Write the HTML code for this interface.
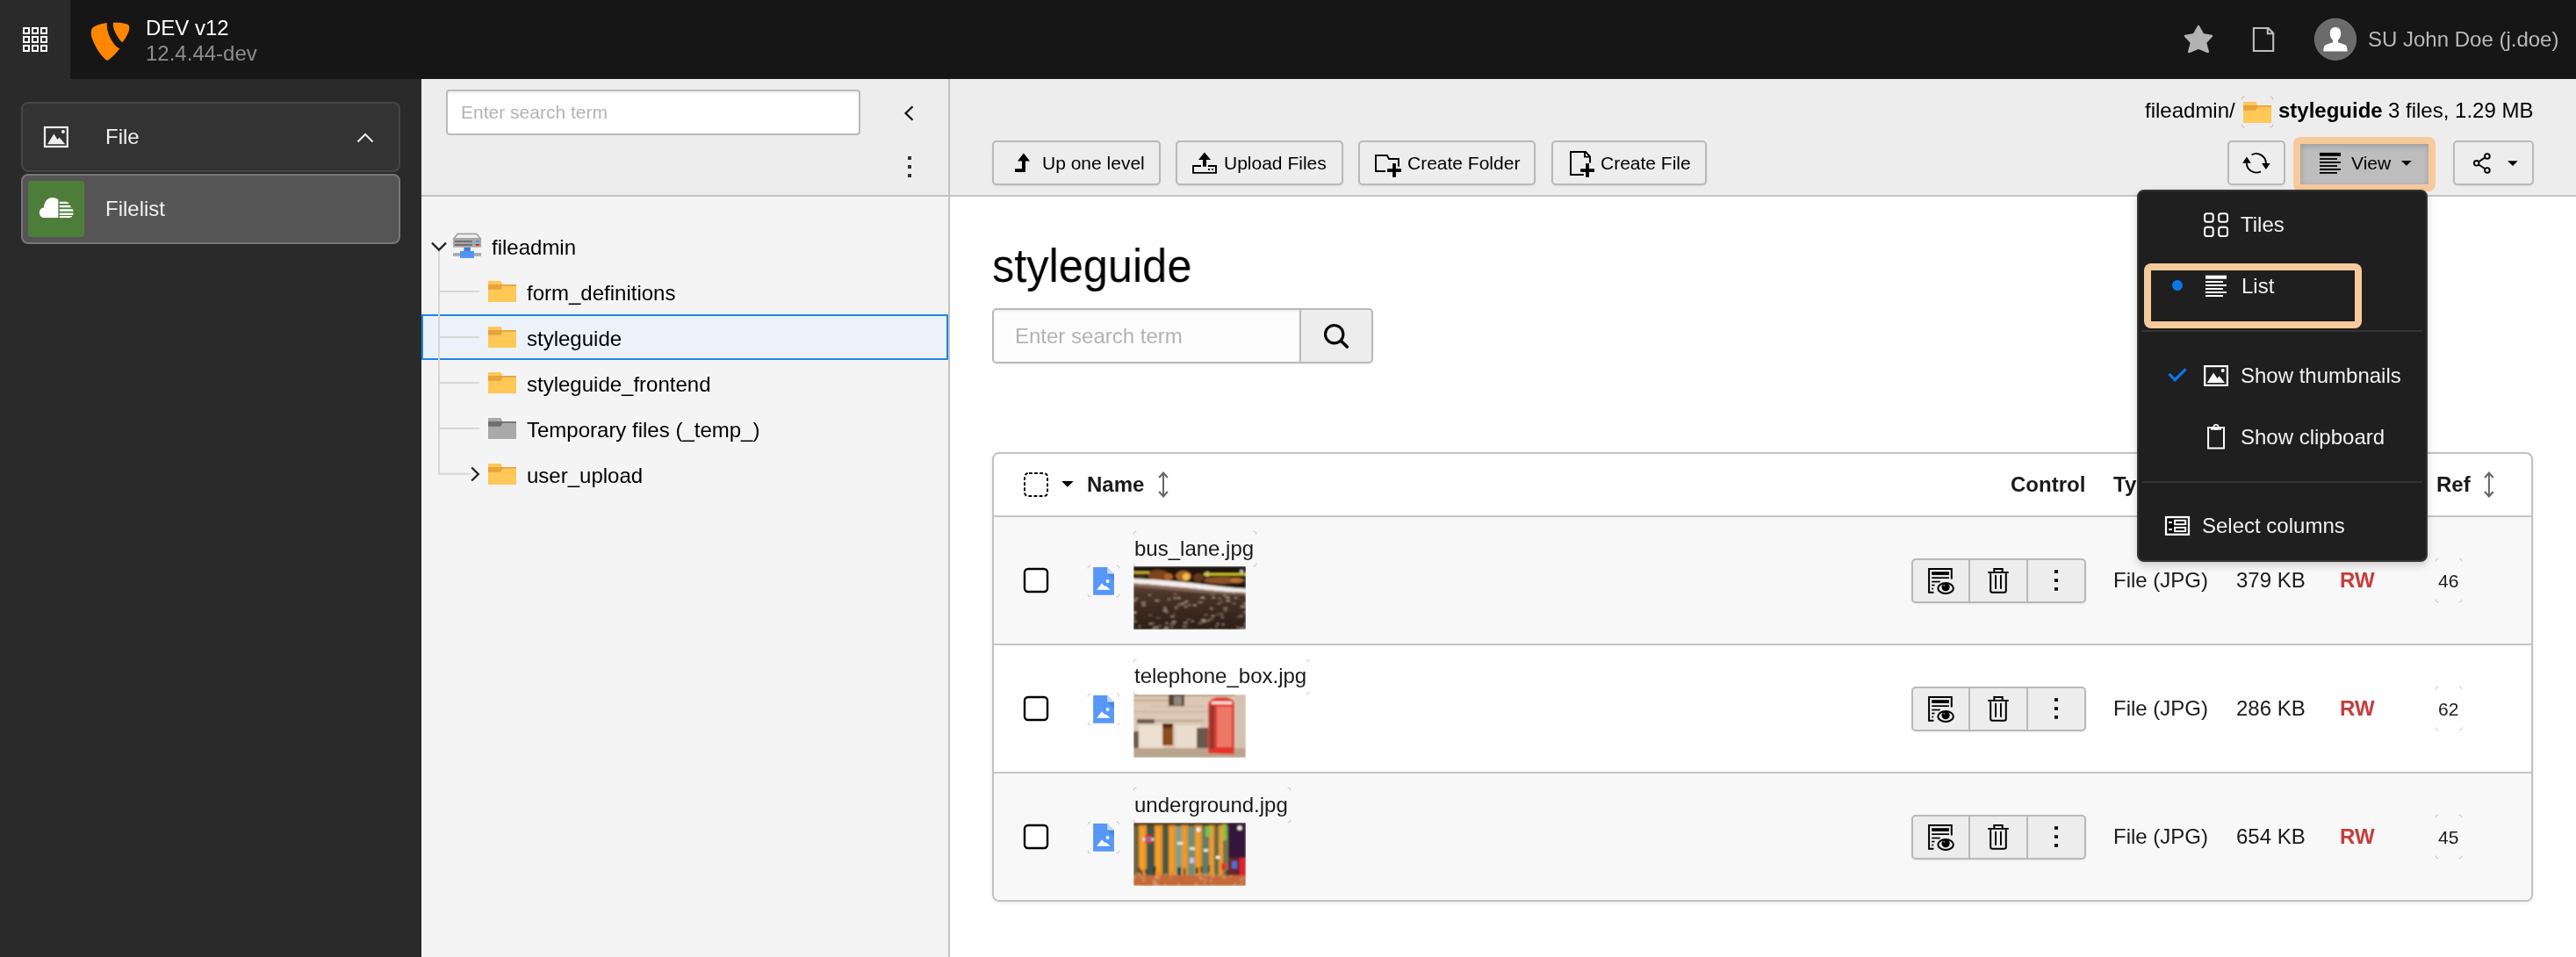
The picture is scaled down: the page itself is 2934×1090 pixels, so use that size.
<!DOCTYPE html>
<html><head><meta charset="utf-8">
<style>
*{box-sizing:border-box;margin:0;padding:0}
html,body{width:2934px;height:1090px;overflow:hidden;background:#fff;font-family:"Liberation Sans",sans-serif;color:#000}
svg{position:absolute;overflow:visible}
#topbar{position:absolute;left:0;top:0;width:2934px;height:90px;background:#161616}
#mtoggle{position:absolute;left:0;top:0;width:80px;height:90px;background:#2a2a2a}
#sidebar{position:absolute;left:0;top:90px;width:480px;height:1000px;background:#2a2a2a}
#treehead{position:absolute;left:480px;top:90px;width:600px;height:132px;background:#ededed}
#treebody{position:absolute;left:480px;top:224px;width:600px;height:866px;background:#f4f4f4}
.hline{position:absolute;height:2px;background:#c3c3c3}
.vline{position:absolute;width:2px;background:#c3c3c3}
#dochead{position:absolute;left:1082px;top:90px;width:1852px;height:132px;background:#ededed}
.t{position:absolute;white-space:nowrap;line-height:1;font-size:24px;will-change:transform}
.box{position:absolute}
</style></head><body>
<div id="topbar"></div>
<div id="mtoggle"></div>
<!-- grid icon -->
<svg style="left:0;top:0" width="80" height="90" viewBox="0 0 80 90">
 <g fill="none" stroke="#fff" stroke-width="2">
  <rect x="27" y="32" width="6" height="6"/><rect x="37" y="32" width="6" height="6"/><rect x="47" y="32" width="6" height="6"/>
  <rect x="27" y="42" width="6" height="6"/><rect x="37" y="42" width="6" height="6"/><rect x="47" y="42" width="6" height="6"/>
  <rect x="27" y="52" width="6" height="6"/><rect x="37" y="52" width="6" height="6"/><rect x="47" y="52" width="6" height="6"/>
 </g>
</svg>
<!-- typo3 logo -->
<svg style="left:95px;top:20px" width="60" height="55" viewBox="95 20 60 55">
 <path fill="#ff8700" d="M104.5,33 C107,29.5 114,27 122,26 C121,30 123,38 125.5,43 C128,48 132,54 136.4,55.3 C132,61 127,66.5 122,69 C116,65 109,55 105,44 C103.5,40 103.5,36 104.5,33 Z"/>
 <path fill="#ff8700" d="M129,25.7 C135,25.5 142,26 145.5,27.8 C148,29.5 147.5,33 146.5,36 C145,40 142,45 139.3,48.2 C136,46 132,39 130,34 C129,31 128.5,28 129,25.7 Z"/>
</svg>
<div class="t" style="left:166px;top:20px;color:#fff">DEV v12</div>
<div class="t" style="left:166px;top:49px;color:#8c8c8c">12.4.44-dev</div>
<!-- star -->
<svg style="left:2480px;top:20px" width="60" height="50" viewBox="2480 20 60 50">
 <path fill="#b3b3b3" stroke="#b3b3b3" stroke-width="2.5" stroke-linejoin="round" d="M2504,30 L2509,39.2 L2519,41 L2512,48.5 L2514.8,59 L2504,54.5 L2493.2,59 L2496,48.5 L2489,41 L2499,39.2 Z"/>
</svg>
<!-- page icon -->
<svg style="left:2560px;top:25px" width="40" height="40" viewBox="2560 25 40 40">
 <path fill="none" stroke="#bdbdbd" stroke-width="2.1" d="M2566.9,32 H2583.5 L2589.2,37.7 V58 H2566.9 Z M2582.8,32 V38.2 H2589.2"/>
</svg>
<!-- avatar -->
<svg style="left:2630px;top:15px" width="60" height="60" viewBox="2630 15 60 60">
 <circle cx="2660" cy="44.8" r="23.6" fill="#6b6b6b" stroke="#757575" stroke-width="1"/>
 <path fill="#fff" d="M2660,31 C2664.5,31 2666.2,34 2666.2,38 C2666.2,41.5 2664.8,44.2 2663,45.5 L2663,48.3 C2665,49.3 2670,50 2672.3,52 C2673.2,53.2 2673.5,56 2673.5,58.4 L2646.3,58.4 C2646.3,56 2646.8,53.2 2647.7,52 C2650,50 2655,49.3 2657,48.3 L2657,45.5 C2655.2,44.2 2653.8,41.5 2653.8,38 C2653.8,34 2655.5,31 2660,31 Z"/>
</svg>
<div class="t" style="left:2697px;top:33px;color:#b9b9b9">SU John Doe (j.doe)</div>

<div id="sidebar"></div>
<!-- File group -->
<div class="box" style="left:24px;top:116px;width:432px;height:80px;background:#333;border:2px solid #454545;border-radius:8px"></div>
<svg style="left:40px;top:135px" width="50" height="40" viewBox="40 135 50 40">
 <rect x="51" y="145" width="25.8" height="22" fill="none" stroke="#eee" stroke-width="2.2"/>
 <path fill="#eee" d="M54,164.2 L61.4,152.4 L65.5,159 L67.6,156.5 L74.2,164.2 Z"/>
 <circle cx="71.9" cy="150.1" r="2" fill="#eee"/>
</svg>
<div class="t" style="left:120px;top:144px;color:#f0f0f0">File</div>
<svg style="left:400px;top:145px" width="30" height="25" viewBox="400 145 30 25">
 <path fill="none" stroke="#eee" stroke-width="2" d="M407.5,161.5 L416,153 L424.5,161.5"/>
</svg>
<!-- Filelist -->
<div class="box" style="left:24px;top:198px;width:432px;height:80px;background:#555;border:2px solid #777;border-radius:8px"></div>
<div class="box" style="left:32px;top:206px;width:64px;height:64px;background:#4c7e39;border-radius:4px"></div>
<svg style="left:32px;top:206px" width="64" height="64" viewBox="32 206 64 64">
 <path fill="#fff" d="M66.4,248 L50,248 C46.8,248 44.9,245.5 44.9,242.3 C44.9,239 47,236.8 49.8,236.5 C50.5,230 53.8,224.9 59.5,224.9 C62.5,224.9 64.8,226 66.4,227.5 Z"/>
<clipPath id="cl"><path d="M67.6,229.4 H73.5 C77.5,229.4 80,232 80.6,235.8 C82.6,236.4 83.6,239 83.6,242 C83.6,245.6 81.4,248.2 78.2,248.2 H67.6 Z"/></clipPath><g fill="#fff" clip-path="url(#cl)"><rect x="67.6" y="229.4" width="17" height="2.6"/><rect x="67.6" y="233.8" width="17" height="2.5"/><rect x="67.6" y="238.2" width="17" height="2.5"/><rect x="67.6" y="242.6" width="17" height="2.4"/><rect x="67.6" y="246" width="17" height="2.2"/></g>
</svg>
<div class="t" style="left:120px;top:226px;color:#f0f0f0">Filelist</div>

<div id="treehead"></div>
<div id="treebody"></div>
<div id="dochead"></div>
<div class="hline" style="left:480px;top:222px;width:2454px"></div>
<div class="vline" style="left:1080px;top:90px;height:1000px"></div>
<!-- tree -->
<div class="box" style="left:508px;top:102px;width:472px;height:52px;background:#fff;border:2px solid #bbb;border-radius:4px;box-shadow:inset 0 2px 3px rgba(0,0,0,.07)"></div>
<div class="t" style="left:525.3px;top:117.4px;font-size:21px;color:#b3b3b3">Enter search term</div>
<svg style="left:1020px;top:120px" width="30" height="25" viewBox="1020 120 30 25"><path fill="none" stroke="#111" stroke-width="2.2" d="M1039.5,121.3 L1031.5,129 L1039.5,136.7"/></svg>
<svg style="left:1025px;top:170px" width="20" height="40" viewBox="1025 170 20 40"><g fill="#333"><rect x="1034" y="178" width="4" height="4"/><rect x="1034" y="188" width="4" height="4"/><rect x="1034" y="198" width="4" height="4"/></g></svg>
<div class="box" style="left:480px;top:358px;width:600px;height:52px;background:#ecf2fa;border:2px solid #1d87e6"></div>
<svg style="left:480px;top:250px" width="600" height="320" viewBox="480 250 600 320">
<g fill="#d7d7d7"><rect x="499" y="285" width="2" height="255.7"/>
<rect x="501" y="331" width="45" height="2"/>
<rect x="501" y="383" width="45" height="2"/>
<rect x="501" y="435" width="45" height="2"/>
<rect x="501" y="487" width="45" height="2"/>
<rect x="499" y="538.7" width="37" height="2"/>
</g>
<path fill="none" stroke="#222" stroke-width="2.2" d="M492,276.6 L500,284.6 L508,276.6"/>
<path fill="none" stroke="#222" stroke-width="2.3" d="M537.2,532.5 L544.8,540 L537.2,547.5"/>
<path fill="#eee" stroke="#a3a3a3" stroke-width="1.6" d="M521.3,266.4 H542.7 L547.2,271.7 H516.8 Z"/>
<rect x="516" y="271.7" width="32" height="10" fill="#a8a8a8"/>
<rect x="518.1" y="274" width="19.8" height="1.8" fill="#6b6b6b"/><rect x="518.1" y="278" width="19.8" height="1.8" fill="#6b6b6b"/>
<rect x="541.9" y="274" width="4" height="1.8" fill="#4f95f3"/><rect x="541.9" y="278" width="4" height="1.8" fill="#d32020"/>
<rect x="516" y="288.1" width="32" height="3.7" fill="#aaa"/>
<rect x="528.4" y="281.7" width="7.4" height="4.5" fill="#3f7cd6"/><rect x="524" y="286" width="16" height="7.9" fill="#5194f6"/>
<path fill="#ffc857" d="M556,320 H570.5 L572.2,324 H588 V344 H556 Z"/>
<path fill="#e8a33d" d="M556,324 H588 V325.8 H572.2 L570.5,329.8 H556 Z"/>
<path fill="#ffc857" d="M556,372 H570.5 L572.2,376 H588 V396 H556 Z"/>
<path fill="#e8a33d" d="M556,376 H588 V377.8 H572.2 L570.5,381.8 H556 Z"/>
<path fill="#ffc857" d="M556,424 H570.5 L572.2,428 H588 V448 H556 Z"/>
<path fill="#e8a33d" d="M556,428 H588 V429.8 H572.2 L570.5,433.8 H556 Z"/>
<path fill="#a9a9a9" d="M556,476 H570.5 L572.2,480 H588 V500 H556 Z"/>
<path fill="#6f6f6f" d="M556,480 H588 V481.8 H572.2 L570.5,485.8 H556 Z"/>
<path fill="#ffc857" d="M556,528 H570.5 L572.2,532 H588 V552 H556 Z"/>
<path fill="#e8a33d" d="M556,532 H588 V533.8 H572.2 L570.5,537.8 H556 Z"/>
</svg>
<div class="t" style="left:559.5px;top:270px">fileadmin</div>
<div class="t" style="left:599.5px;top:322px">form_definitions</div>
<div class="t" style="left:599.5px;top:374px">styleguide</div>
<div class="t" style="left:599.5px;top:426px">styleguide_frontend</div>
<div class="t" style="left:599.5px;top:478px">Temporary files (_temp_)</div>
<div class="t" style="left:599.5px;top:530px">user_upload</div>
<!-- TREEHEAD_END -->
<!-- docheader -->
<style>.btn{background:#ededed;border:2px solid #b9b9b9;border-radius:5px;box-shadow:0 1px 2px rgba(0,0,0,.08)}</style>
<div class="box btn" style="left:1130px;top:160px;width:192px;height:51.4px"></div>
<div class="box btn" style="left:1338.5px;top:160px;width:191px;height:51.4px"></div>
<div class="box btn" style="left:1546.5px;top:160px;width:202.5px;height:51.4px"></div>
<div class="box btn" style="left:1766.5px;top:160px;width:177px;height:51.4px"></div>
<div class="box btn" style="left:2536.5px;top:160px;width:66.5px;height:51.4px"></div>
<div class="box btn" style="left:2793.5px;top:160px;width:92px;height:51.4px"></div>
<div class="box" style="left:2612px;top:156px;width:162px;height:62px;background:#f7ca9c;border-radius:8px"></div>
<div class="box" style="left:2620px;top:164px;width:146px;height:46px;background:#bdbdbd;box-shadow:inset 0 3px 6px rgba(0,0,0,.13), inset 3px 0 6px rgba(0,0,0,.05)"></div>
<div class="t" style="left:1186.7px;top:175.1px;font-size:21px">Up one level</div>
<div class="t" style="left:1394.4px;top:175.1px;font-size:21px">Upload Files</div>
<div class="t" style="left:1603.3px;top:175.1px;font-size:21px">Create Folder</div>
<div class="t" style="left:1822.9px;top:175.1px;font-size:21px">Create File</div>
<div class="t" style="left:2677.7px;top:175.1px;font-size:21px">View</div>
<div class="t" style="left:2443.4px;top:113.5px">fileadmin/</div>
<div class="t" style="left:2594.9px;top:113.5px;font-weight:bold">styleguide</div>
<div class="t" style="left:2720.1px;top:113.5px">3 files, 1.29 MB</div>
<svg style="left:1100px;top:100px" width="1834" height="120" viewBox="1100 100 1834 120">
<path d="M1165.9,174.4 L1173,183.6 L1167.9,183.6 L1167.9,195.9 L1156,195.9 L1156,192.2 L1164,192.2 L1164,183.6 L1159,183.6 Z"/>
<path d="M1371.9,173.6 L1379,181.9 L1374,181.9 L1374,189.7 L1370,189.7 L1370,181.9 L1365,181.9 Z"/>
<path fill="none" stroke="#000" stroke-width="1.9" d="M1368,189 H1359 V196.9 H1385 V189 H1376"/>
<rect x="1376.1" y="192" width="1.9" height="1.9"/><rect x="1380.1" y="192" width="1.9" height="1.9"/>
<path fill="none" stroke="#000" stroke-width="1.9" d="M1578,195 H1567 V177 H1579.8 L1582,181 H1593 V189.7"/>
<rect x="1586.1" y="186.1" width="3.8" height="15.7"/><rect x="1580.1" y="192.2" width="15.9" height="3.7"/>
<path fill="none" stroke="#000" stroke-width="1.95" d="M1803.8,199 H1789 V173 H1806 L1811,178.3 V185.5 M1805,173.5 V178.6 H1810.5"/>
<rect x="1806.1" y="186.1" width="3.8" height="15.7"/><rect x="1800.1" y="192.2" width="15.9" height="3.7"/>
<path fill="none" stroke="#000" stroke-width="1.9" d="M2564.6,176.3 A11.1,11.1 0 0 1 2580.9,186"/>
<path fill="none" stroke="#000" stroke-width="1.9" d="M2558.8,185.8 A11.1,11.1 0 0 0 2575,195.3"/>
<path d="M2576.1,186.1 L2585.7,186.1 L2580.9,193 Z"/><path d="M2554.2,185.7 L2563.8,185.7 L2559,178.6 Z"/>
<rect x="2642" y="173.9" width="24" height="3.9"/><rect x="2642" y="180.1" width="20" height="1.8"/><rect x="2642" y="184" width="24" height="1.8"/><rect x="2642" y="188.1" width="20" height="1.8"/><rect x="2642" y="192" width="24" height="1.8"/><rect x="2642" y="196" width="20" height="1.8"/>
<path d="M2735,182.9 L2746.8,182.9 L2740.9,188.8 Z"/>
<g fill="none" stroke="#000" stroke-width="1.9"><circle cx="2832.9" cy="177.9" r="2.8"/><circle cx="2820.7" cy="185.8" r="2.8"/><circle cx="2832.9" cy="193.9" r="2.8"/><path d="M2823.1,184.2 L2830.5,179.4 M2823.1,187.5 L2830.5,192.3"/></g>
<path d="M2856.1,183.2 L2867.7,183.2 L2862,188.9 Z"/>
<path fill="#ffc857" d="M2555,116 H2569.5 L2571.2,120 H2587 V140 H2555 Z"/>
<path fill="#e8a33d" d="M2555,120 H2587 V121.8 H2571.2 L2569.5,125.8 H2555 Z"/>
</svg>
<!-- DOCHEAD_END -->
<!-- content -->
<div class="t" style="left:1130px;top:274.8px;font-size:54px;transform:scaleX(0.935);transform-origin:0 0">styleguide</div>
<div class="box" style="left:1130px;top:351px;width:434px;height:63.4px;border:2px solid #b9b9b9;border-radius:5px;background:#ededed;box-shadow:0 1px 2px rgba(0,0,0,.06)"></div>
<div class="box" style="left:1132px;top:353px;width:348px;height:59.4px;background:#fdfdfd;box-shadow:inset 0 2px 3px rgba(0,0,0,.06);border-radius:3px 0 0 3px"></div>
<div class="box" style="left:1480px;top:353px;width:2px;height:59.4px;background:#b9b9b9"></div>
<div class="t" style="left:1156px;top:371px;color:#b3b3b3">Enter search term</div>
<svg style="left:1500px;top:360px" width="50" height="45" viewBox="1500 360 50 45"><circle cx="1519.7" cy="380.7" r="10.2" fill="none" stroke="#000" stroke-width="3.1"/><path d="M1527.3,388.3 L1534.3,395" stroke="#000" stroke-width="3.6" stroke-linecap="round"/></svg>
<div class="box" style="left:1130px;top:515px;width:1754.5px;height:512px;border:2px solid #c2c2c2;border-radius:8px;background:#fff;overflow:hidden;box-shadow:0 1px 4px rgba(0,0,0,.1)"><div class="box" style="left:0;top:70px;width:100%;height:2px;background:#c6c6c6"></div><div class="box" style="left:0;top:72px;width:100%;height:144px;background:#f8f8f8"></div><div class="box" style="left:0;top:216px;width:100%;height:2px;background:#c6c6c6"></div><div class="box" style="left:0;top:362px;width:100%;height:2px;background:#c6c6c6"></div><div class="box" style="left:0;top:364px;width:100%;height:144px;background:#f8f8f8"></div></div>
<div class="t" style="left:1238px;top:540px;font-weight:bold;color:#1a1a1a">Name</div>
<div class="t" style="left:2289.8px;top:540px;font-weight:bold;color:#1a1a1a">Control</div>
<div class="t" style="left:2406.5px;top:540px;font-weight:bold;color:#1a1a1a">Type</div>
<div class="t" style="left:2774.7px;top:540px;font-weight:bold;color:#1a1a1a">Ref</div>
<div class="box" style="left:2176.5px;top:635.5px;width:199px;height:51px;border:2px solid #b9b9b9;border-radius:5px;background:#ededed;box-shadow:0 1px 2px rgba(0,0,0,.08)"></div>
<div class="box" style="left:2241.7px;top:635.5px;width:2px;height:51px;background:#b9b9b9"></div>
<div class="box" style="left:2307.8px;top:635.5px;width:2px;height:51px;background:#b9b9b9"></div>
<div class="t" style="left:1291.5px;top:612.7px;color:#1a1a1a">bus_lane.jpg</div>
<div class="t" style="left:2406.7px;top:648.6px;color:#1a1a1a">File (JPG)</div>
<div class="t" style="left:2547px;top:648.6px;color:#1a1a1a">379 KB</div>
<div class="t" style="left:2664.8px;top:648.6px;color:#c83c3c;font-weight:bold">RW</div>
<div class="t" style="left:2776.5px;top:651.4px;font-size:21px;color:#1a1a1a">46</div>
<div class="box" style="left:2176.5px;top:781.5px;width:199px;height:51px;border:2px solid #b9b9b9;border-radius:5px;background:#ededed;box-shadow:0 1px 2px rgba(0,0,0,.08)"></div>
<div class="box" style="left:2241.7px;top:781.5px;width:2px;height:51px;background:#b9b9b9"></div>
<div class="box" style="left:2307.8px;top:781.5px;width:2px;height:51px;background:#b9b9b9"></div>
<div class="t" style="left:1291.5px;top:758.3000000000001px;color:#1a1a1a">telephone_box.jpg</div>
<div class="t" style="left:2406.7px;top:794.6px;color:#1a1a1a">File (JPG)</div>
<div class="t" style="left:2547px;top:794.6px;color:#1a1a1a">286 KB</div>
<div class="t" style="left:2664.8px;top:794.6px;color:#c83c3c;font-weight:bold">RW</div>
<div class="t" style="left:2776.5px;top:797.4px;font-size:21px;color:#1a1a1a">62</div>
<div class="box" style="left:2176.5px;top:927.5px;width:199px;height:51px;border:2px solid #b9b9b9;border-radius:5px;background:#ededed;box-shadow:0 1px 2px rgba(0,0,0,.08)"></div>
<div class="box" style="left:2241.7px;top:927.5px;width:2px;height:51px;background:#b9b9b9"></div>
<div class="box" style="left:2307.8px;top:927.5px;width:2px;height:51px;background:#b9b9b9"></div>
<div class="t" style="left:1291.5px;top:904.7px;color:#1a1a1a">underground.jpg</div>
<div class="t" style="left:2406.7px;top:940.6px;color:#1a1a1a">File (JPG)</div>
<div class="t" style="left:2547px;top:940.6px;color:#1a1a1a">654 KB</div>
<div class="t" style="left:2664.8px;top:940.6px;color:#c83c3c;font-weight:bold">RW</div>
<div class="t" style="left:2776.5px;top:943.4px;font-size:21px;color:#1a1a1a">45</div>
<svg style="left:1140px;top:520px" width="1760" height="500" viewBox="1140 520 1760 500">
<rect x="1167" y="539" width="26" height="26" rx="4" fill="none" stroke="#000" stroke-width="2" stroke-dasharray="3.8 2.3" stroke-dashoffset="-1"/>
<path d="M1209.1,548.1 L1222.7,548.1 L1215.9,554.7 Z"/>
<path fill="none" stroke="#666" stroke-width="2" d="M1325.0,539 V565"/><path fill="none" stroke="#666" stroke-width="2.2" stroke-linejoin="miter" d="M1320.2,544 L1325.0,538.6 L1329.8,544 M1320.2,560 L1325.0,565.4 L1329.8,560"/>
<path fill="none" stroke="#666" stroke-width="2" d="M2834.8999999999996,539 V565"/><path fill="none" stroke="#666" stroke-width="2.2" stroke-linejoin="miter" d="M2830.1,544 L2834.8999999999996,538.6 L2839.7,544 M2830.1,560 L2834.8999999999996,565.4 L2839.7,560"/>
<rect x="1167" y="648" width="26" height="26" rx="4" fill="#fff" stroke="#000" stroke-width="2.4"/>
<path fill="#5598f8" d="M1245.1,645.9 H1261.1 L1268.9,653.6999999999999 V677.8 H1245.1 Z"/>
<path fill="#c6dbfc" d="M1261.1,645.9 L1268.9,653.6999999999999 H1261.1 Z"/>
<path fill="#4a86e0" d="M1261.1,653.6999999999999 H1268.9 V661.5 Z"/>
<path fill="#fff" d="M1249.1,671.8 L1255.1,664.3 L1257.9,667.8 L1259.4,667.1999999999999 L1264.6,671.8 Z"/><circle cx="1261.6" cy="662.0" r="2" fill="#fff"/>
<path fill="none" stroke="#000" stroke-width="2" d="M2202.5,674.8 H2197.1 V648.1 H2222.8 V659.5"/>
<rect x="2200.2" y="651.2" width="19.7" height="3.7"/><rect x="2200.2" y="657.3" width="19.7" height="1.7"/><rect x="2200.2" y="661.7" width="9.5" height="1.7"/><rect x="2200.2" y="665.7" width="3.3" height="1.7"/><rect x="2200.2" y="669.7" width="2" height="1.7"/>
<ellipse cx="2216.1" cy="670.0" rx="8.8" ry="5.9" fill="#ededed" stroke="#000" stroke-width="2"/><circle cx="2216.1" cy="668.7" r="4.6"/><circle cx="2214.3" cy="666.8" r="1" fill="#777"/>
<rect x="2264.2" y="651.0" width="23.6" height="1.8"/><path fill="none" stroke="#000" stroke-width="2" d="M2271.3,651.0 V648.1 H2280.7 V651.0"/>
<path fill="none" stroke="#000" stroke-width="2" d="M2267.2,652.8 V672.8 Q2267.2,674.8 2269.2,674.8 H2282.8 Q2284.8,674.8 2284.8,672.8 V652.8"/>
<rect x="2272.1" y="654.9" width="1.9" height="15.9"/><rect x="2278" y="654.9" width="1.9" height="15.9"/>
<rect x="2340" y="649.2" width="4" height="3.6"/><rect x="2340" y="659.3" width="4" height="3.6"/><rect x="2340" y="669.1" width="4" height="3.6"/>
<rect x="1167" y="794" width="26" height="26" rx="4" fill="#fff" stroke="#000" stroke-width="2.4"/>
<path fill="#5598f8" d="M1245.1,791.9 H1261.1 L1268.9,799.7 V823.8 H1245.1 Z"/>
<path fill="#c6dbfc" d="M1261.1,791.9 L1268.9,799.7 H1261.1 Z"/>
<path fill="#4a86e0" d="M1261.1,799.7 H1268.9 V807.5 Z"/>
<path fill="#fff" d="M1249.1,817.8 L1255.1,810.3 L1257.9,813.8 L1259.4,813.2 L1264.6,817.8 Z"/><circle cx="1261.6" cy="808" r="2" fill="#fff"/>
<path fill="none" stroke="#000" stroke-width="2" d="M2202.5,820.8 H2197.1 V794.1 H2222.8 V805.5"/>
<rect x="2200.2" y="797.2" width="19.7" height="3.7"/><rect x="2200.2" y="803.3" width="19.7" height="1.7"/><rect x="2200.2" y="807.7" width="9.5" height="1.7"/><rect x="2200.2" y="811.7" width="3.3" height="1.7"/><rect x="2200.2" y="815.7" width="2" height="1.7"/>
<ellipse cx="2216.1" cy="816" rx="8.8" ry="5.9" fill="#ededed" stroke="#000" stroke-width="2"/><circle cx="2216.1" cy="814.7" r="4.6"/><circle cx="2214.3" cy="812.8" r="1" fill="#777"/>
<rect x="2264.2" y="797" width="23.6" height="1.8"/><path fill="none" stroke="#000" stroke-width="2" d="M2271.3,797 V794.1 H2280.7 V797"/>
<path fill="none" stroke="#000" stroke-width="2" d="M2267.2,798.8 V818.8 Q2267.2,820.8 2269.2,820.8 H2282.8 Q2284.8,820.8 2284.8,818.8 V798.8"/>
<rect x="2272.1" y="800.9" width="1.9" height="15.9"/><rect x="2278" y="800.9" width="1.9" height="15.9"/>
<rect x="2340" y="795.2" width="4" height="3.6"/><rect x="2340" y="805.3" width="4" height="3.6"/><rect x="2340" y="815.1" width="4" height="3.6"/>
<rect x="1167" y="940" width="26" height="26" rx="4" fill="#fff" stroke="#000" stroke-width="2.4"/>
<path fill="#5598f8" d="M1245.1,937.9 H1261.1 L1268.9,945.6999999999999 V969.8 H1245.1 Z"/>
<path fill="#c6dbfc" d="M1261.1,937.9 L1268.9,945.6999999999999 H1261.1 Z"/>
<path fill="#4a86e0" d="M1261.1,945.6999999999999 H1268.9 V953.5 Z"/>
<path fill="#fff" d="M1249.1,963.8 L1255.1,956.3 L1257.9,959.8 L1259.4,959.1999999999999 L1264.6,963.8 Z"/><circle cx="1261.6" cy="954.0" r="2" fill="#fff"/>
<path fill="none" stroke="#000" stroke-width="2" d="M2202.5,966.8 H2197.1 V940.1 H2222.8 V951.5"/>
<rect x="2200.2" y="943.2" width="19.7" height="3.7"/><rect x="2200.2" y="949.3" width="19.7" height="1.7"/><rect x="2200.2" y="953.7" width="9.5" height="1.7"/><rect x="2200.2" y="957.7" width="3.3" height="1.7"/><rect x="2200.2" y="961.7" width="2" height="1.7"/>
<ellipse cx="2216.1" cy="962.0" rx="8.8" ry="5.9" fill="#ededed" stroke="#000" stroke-width="2"/><circle cx="2216.1" cy="960.7" r="4.6"/><circle cx="2214.3" cy="958.8" r="1" fill="#777"/>
<rect x="2264.2" y="943.0" width="23.6" height="1.8"/><path fill="none" stroke="#000" stroke-width="2" d="M2271.3,943.0 V940.1 H2280.7 V943.0"/>
<path fill="none" stroke="#000" stroke-width="2" d="M2267.2,944.8 V964.8 Q2267.2,966.8 2269.2,966.8 H2282.8 Q2284.8,966.8 2284.8,964.8 V944.8"/>
<rect x="2272.1" y="946.9" width="1.9" height="15.9"/><rect x="2278" y="946.9" width="1.9" height="15.9"/>
<rect x="2340" y="941.2" width="4" height="3.6"/><rect x="2340" y="951.3" width="4" height="3.6"/><rect x="2340" y="961.1" width="4" height="3.6"/>
</svg>
<svg style="left:0;top:0;width:0;height:0"><defs><filter id="bl" x="0" y="0" width="1" height="1"><feGaussianBlur stdDeviation="0.8"/></filter></defs></svg>
<svg style="left:1291px;top:645px;overflow:hidden" width="128" height="72" viewBox="0 0 128 72"><g filter="url(#bl)"><defs><linearGradient id="bg1" x1="0" y1="0" x2="0" y2="1"><stop offset="0.2" stop-color="#6a4a3c"/><stop offset="0.45" stop-color="#4a3428"/><stop offset="1" stop-color="#2c1e16"/></linearGradient></defs><rect width="128" height="72" fill="url(#bg1)"/><path d="M0,0 H128 V26 C110,24 90,21 70,19 C50,17 20,15 0,15 Z" fill="#1c120c"/><ellipse cx="28" cy="10" rx="12" ry="6" fill="#8a4a1c" opacity="0.9"/><ellipse cx="40" cy="12" rx="5" ry="4" fill="#c06a28" opacity="0.9"/><ellipse cx="57" cy="11" rx="9" ry="6" fill="#b87028" opacity="0.9"/><ellipse cx="60" cy="12" rx="4" ry="4" fill="#f0c050" opacity="1"/><ellipse cx="74" cy="13" rx="6" ry="5" fill="#7a4420" opacity="0.8"/><ellipse cx="84" cy="9" rx="3" ry="3" fill="#e8c8a0" opacity="0.8"/><ellipse cx="100" cy="16" rx="20" ry="4" fill="#9a5a2a" opacity="0.9"/><ellipse cx="118" cy="16" rx="8" ry="3" fill="#c07838" opacity="0.9"/><ellipse cx="123" cy="6" rx="2" ry="2" fill="#ffffff" opacity="0.8"/><ellipse cx="8" cy="10" rx="6" ry="4" fill="#5a3418" opacity="0.8"/><rect x="0" y="6" width="18" height="2.2" fill="#c8c038"/><rect x="80" y="8" width="48" height="2.4" fill="#d8d020"/><path d="M0,14 C20,14.5 50,17 70,19.5 C90,22 110,24.5 128,25.5 L128,30 C110,29.5 90,28 65,25 C45,23 20,20.5 0,19.5 Z" fill="#f4eeea"/><path d="M0,19.5 C20,20.5 45,23 65,25 C90,28 110,29.5 128,30 L128,33 C100,32 60,29 0,23 Z" fill="#9a7a6a" opacity=".7"/><ellipse cx="79.7" cy="61.2" rx="2.9" ry="0.9" fill="#c4b4a8" opacity="0.77"/><ellipse cx="94.7" cy="68.7" rx="1.5" ry="0.9" fill="#c4b4a8" opacity="0.56"/><ellipse cx="120.7" cy="57.3" rx="3.0" ry="0.9" fill="#c4b4a8" opacity="0.40"/><ellipse cx="60.0" cy="40.4" rx="2.4" ry="0.9" fill="#c4b4a8" opacity="0.61"/><ellipse cx="1.7" cy="39.1" rx="2.0" ry="0.9" fill="#c4b4a8" opacity="0.76"/><ellipse cx="98.0" cy="36.7" rx="2.9" ry="0.9" fill="#c4b4a8" opacity="0.41"/><ellipse cx="79.0" cy="35.3" rx="1.5" ry="0.9" fill="#c4b4a8" opacity="0.74"/><ellipse cx="26.8" cy="39.1" rx="3.2" ry="0.9" fill="#c4b4a8" opacity="0.74"/><ellipse cx="37.0" cy="70.4" rx="2.4" ry="0.9" fill="#c4b4a8" opacity="0.66"/><ellipse cx="26.2" cy="69.5" rx="2.7" ry="0.9" fill="#c4b4a8" opacity="0.78"/><ellipse cx="114.4" cy="42.5" rx="2.1" ry="0.9" fill="#c4b4a8" opacity="0.42"/><ellipse cx="18.6" cy="32.7" rx="2.0" ry="0.9" fill="#c4b4a8" opacity="0.62"/><ellipse cx="0.4" cy="58.5" rx="2.1" ry="0.9" fill="#c4b4a8" opacity="0.49"/><ellipse cx="104.8" cy="50.2" rx="2.0" ry="0.9" fill="#c4b4a8" opacity="0.57"/><ellipse cx="90.2" cy="32.4" rx="3.2" ry="0.9" fill="#c4b4a8" opacity="0.36"/><ellipse cx="96.0" cy="65.5" rx="1.5" ry="0.9" fill="#c4b4a8" opacity="0.70"/><ellipse cx="46.9" cy="54.3" rx="1.5" ry="0.9" fill="#c4b4a8" opacity="0.37"/><ellipse cx="23.2" cy="70.1" rx="1.8" ry="0.9" fill="#c4b4a8" opacity="0.69"/><ellipse cx="119.0" cy="69.6" rx="2.1" ry="0.9" fill="#c4b4a8" opacity="0.51"/><ellipse cx="67.2" cy="62.6" rx="1.7" ry="0.9" fill="#c4b4a8" opacity="0.69"/><ellipse cx="102.0" cy="66.1" rx="1.6" ry="0.9" fill="#c4b4a8" opacity="0.78"/><ellipse cx="11.7" cy="44.3" rx="2.5" ry="0.9" fill="#c4b4a8" opacity="0.76"/><ellipse cx="43.5" cy="68.8" rx="2.4" ry="0.9" fill="#c4b4a8" opacity="0.49"/><ellipse cx="40.6" cy="37.5" rx="1.6" ry="0.9" fill="#c4b4a8" opacity="0.42"/><ellipse cx="88.2" cy="71.9" rx="1.8" ry="0.9" fill="#c4b4a8" opacity="0.37"/><ellipse cx="126.3" cy="52.4" rx="2.2" ry="0.9" fill="#c4b4a8" opacity="0.46"/><ellipse cx="76.0" cy="64.7" rx="2.3" ry="0.9" fill="#c4b4a8" opacity="0.54"/><ellipse cx="7.1" cy="68.5" rx="1.6" ry="0.9" fill="#c4b4a8" opacity="0.57"/><ellipse cx="107.3" cy="35.5" rx="2.7" ry="0.9" fill="#c4b4a8" opacity="0.78"/><ellipse cx="80.7" cy="63.1" rx="1.7" ry="0.9" fill="#c4b4a8" opacity="0.55"/><ellipse cx="19.1" cy="65.5" rx="2.0" ry="0.9" fill="#c4b4a8" opacity="0.55"/><ellipse cx="127.9" cy="65.8" rx="3.2" ry="0.9" fill="#c4b4a8" opacity="0.55"/><ellipse cx="62.5" cy="60.6" rx="2.3" ry="0.9" fill="#c4b4a8" opacity="0.48"/><ellipse cx="51.7" cy="36.2" rx="2.1" ry="0.9" fill="#c4b4a8" opacity="0.79"/><ellipse cx="122.9" cy="56.3" rx="2.3" ry="0.9" fill="#c4b4a8" opacity="0.50"/><ellipse cx="11.4" cy="41.4" rx="2.8" ry="0.9" fill="#c4b4a8" opacity="0.74"/><ellipse cx="46.2" cy="63.0" rx="2.8" ry="0.9" fill="#c4b4a8" opacity="0.66"/><ellipse cx="85.0" cy="61.9" rx="2.1" ry="0.9" fill="#c4b4a8" opacity="0.67"/><ellipse cx="35.9" cy="50.4" rx="2.8" ry="0.9" fill="#c4b4a8" opacity="0.66"/><ellipse cx="37.6" cy="69.7" rx="2.6" ry="0.9" fill="#c4b4a8" opacity="0.61"/><ellipse cx="1.5" cy="53.0" rx="1.9" ry="0.9" fill="#c4b4a8" opacity="0.65"/><ellipse cx="59.3" cy="64.3" rx="2.6" ry="0.9" fill="#c4b4a8" opacity="0.71"/><ellipse cx="44.5" cy="57.1" rx="2.8" ry="0.9" fill="#c4b4a8" opacity="0.72"/><ellipse cx="44.8" cy="65.4" rx="3.0" ry="0.9" fill="#c4b4a8" opacity="0.66"/><ellipse cx="124.9" cy="70.2" rx="2.4" ry="0.9" fill="#c4b4a8" opacity="0.59"/><ellipse cx="21.3" cy="65.1" rx="3.1" ry="0.9" fill="#c4b4a8" opacity="0.56"/><ellipse cx="88.5" cy="60.2" rx="2.7" ry="0.9" fill="#c4b4a8" opacity="0.43"/><ellipse cx="99.9" cy="54.4" rx="2.6" ry="0.9" fill="#c4b4a8" opacity="0.54"/><ellipse cx="79.8" cy="62.5" rx="2.6" ry="0.9" fill="#c4b4a8" opacity="0.67"/><ellipse cx="3.5" cy="36.7" rx="2.2" ry="0.9" fill="#c4b4a8" opacity="0.64"/><ellipse cx="28.0" cy="58.8" rx="2.6" ry="0.9" fill="#c4b4a8" opacity="0.37"/><ellipse cx="60.4" cy="39.5" rx="1.6" ry="0.9" fill="#c4b4a8" opacity="0.41"/><ellipse cx="40.6" cy="37.6" rx="1.8" ry="0.9" fill="#c4b4a8" opacity="0.37"/><ellipse cx="59.6" cy="46.0" rx="2.5" ry="0.9" fill="#c4b4a8" opacity="0.62"/><ellipse cx="30.4" cy="67.9" rx="1.5" ry="0.9" fill="#c4b4a8" opacity="0.53"/><ellipse cx="35.7" cy="47.2" rx="1.7" ry="0.9" fill="#c4b4a8" opacity="0.72"/><ellipse cx="47.9" cy="31.5" rx="2.5" ry="0.9" fill="#c4b4a8" opacity="0.39"/><ellipse cx="69.8" cy="44.3" rx="2.5" ry="0.9" fill="#c4b4a8" opacity="0.78"/><ellipse cx="104.8" cy="47.6" rx="2.9" ry="0.9" fill="#c4b4a8" opacity="0.64"/><ellipse cx="47.3" cy="36.0" rx="2.5" ry="0.9" fill="#c4b4a8" opacity="0.60"/><ellipse cx="122.5" cy="70.7" rx="2.5" ry="0.9" fill="#c4b4a8" opacity="0.51"/><ellipse cx="114.4" cy="30.0" rx="1.7" ry="0.9" fill="#c4b4a8" opacity="0.60"/><ellipse cx="78.7" cy="35.9" rx="2.6" ry="0.9" fill="#c4b4a8" opacity="0.75"/><ellipse cx="48.1" cy="48.1" rx="1.9" ry="0.9" fill="#c4b4a8" opacity="0.48"/><ellipse cx="124.5" cy="46.0" rx="3.1" ry="0.9" fill="#c4b4a8" opacity="0.76"/><ellipse cx="76.3" cy="40.9" rx="3.2" ry="0.9" fill="#c4b4a8" opacity="0.57"/><ellipse cx="53.2" cy="43.4" rx="3.2" ry="0.9" fill="#c4b4a8" opacity="0.57"/><ellipse cx="36.7" cy="50.0" rx="1.7" ry="0.9" fill="#c4b4a8" opacity="0.63"/><ellipse cx="56.8" cy="42.3" rx="2.8" ry="0.9" fill="#c4b4a8" opacity="0.72"/><ellipse cx="1.7" cy="52.4" rx="2.0" ry="0.9" fill="#c4b4a8" opacity="0.77"/><ellipse cx="100.1" cy="40.3" rx="2.0" ry="0.9" fill="#c4b4a8" opacity="0.42"/><ellipse cx="126.6" cy="42.3" rx="2.5" ry="0.9" fill="#c4b4a8" opacity="0.56"/><ellipse cx="82.5" cy="55.4" rx="2.8" ry="0.9" fill="#c4b4a8" opacity="0.40"/><ellipse cx="97.3" cy="42.6" rx="2.4" ry="0.9" fill="#c4b4a8" opacity="0.50"/><ellipse cx="38.0" cy="52.3" rx="2.3" ry="0.9" fill="#c4b4a8" opacity="0.51"/><ellipse cx="95.4" cy="54.8" rx="1.6" ry="0.9" fill="#c4b4a8" opacity="0.46"/><ellipse cx="58.3" cy="68.5" rx="3.0" ry="0.9" fill="#c4b4a8" opacity="0.60"/><ellipse cx="1.9" cy="62.7" rx="2.2" ry="0.9" fill="#c4b4a8" opacity="0.61"/><ellipse cx="90.6" cy="56.6" rx="2.3" ry="0.9" fill="#c4b4a8" opacity="0.76"/><ellipse cx="49.3" cy="46.5" rx="2.9" ry="0.9" fill="#c4b4a8" opacity="0.44"/><ellipse cx="37.9" cy="64.9" rx="1.6" ry="0.9" fill="#c4b4a8" opacity="0.73"/><ellipse cx="88.9" cy="48.2" rx="2.0" ry="0.9" fill="#c4b4a8" opacity="0.70"/><ellipse cx="116.6" cy="36.0" rx="2.3" ry="0.9" fill="#c4b4a8" opacity="0.60"/><ellipse cx="63.7" cy="43.9" rx="1.8" ry="0.9" fill="#c4b4a8" opacity="0.61"/><ellipse cx="103.9" cy="32.9" rx="1.9" ry="0.9" fill="#c4b4a8" opacity="0.72"/><ellipse cx="101.3" cy="57.9" rx="1.5" ry="0.9" fill="#c4b4a8" opacity="0.68"/><ellipse cx="125.3" cy="71.9" rx="2.7" ry="0.9" fill="#c4b4a8" opacity="0.37"/><ellipse cx="107.8" cy="39.2" rx="2.6" ry="0.9" fill="#c4b4a8" opacity="0.78"/><ellipse cx="91.2" cy="35.7" rx="2.0" ry="0.9" fill="#c4b4a8" opacity="0.76"/><ellipse cx="19.2" cy="55.6" rx="2.2" ry="0.9" fill="#c4b4a8" opacity="0.42"/></g></svg>
<svg style="left:1291px;top:791.4px;overflow:hidden" width="128" height="72" viewBox="0 0 128 72"><g filter="url(#bl)"><rect width="128" height="72" fill="#dcc8b4"/><rect x="0" y="0" width="128" height="1.5" fill="#9a8068"/><rect x="0" y="6" width="40" height="1.5" fill="#b49c86"/><rect x="0" y="19" width="84" height="1.5" fill="#c8b29c"/><rect x="20" y="13" width="60" height="1.2" fill="#c8b09a"/><rect x="40" y="0" width="18" height="13" fill="#5a4232"/><rect x="46" y="2" width="9" height="10" fill="#8e887e"/><rect x="4" y="28" width="20" height="5" fill="#6e5a4a"/><rect x="24" y="29" width="56" height="2" fill="#baa48e"/><rect x="6" y="35" width="28" height="26" fill="#ecdfd2"/><rect x="48" y="35" width="28" height="26" fill="#eadcce"/><rect x="33" y="33" width="12" height="25" fill="#8e4c1e"/><rect x="33" y="33" width="12" height="5" fill="#4a2a16"/><rect x="0" y="42" width="6" height="20" fill="#6a5a4e"/><rect x="72" y="38" width="14" height="26" fill="#6a584c"/><rect x="0" y="61" width="128" height="11" fill="#bba48e"/><path d="M85,67 V12 Q86,3 100,3 Q114,3 115,10 V68 Z" fill="#e4342c"/><rect x="87" y="12" width="5" height="50" fill="#8a3a30"/><rect x="95" y="14" width="17" height="46" fill="#ec7868"/><rect x="89" y="8" width="23" height="3" fill="#f4e4e0"/><rect x="116" y="0" width="12" height="61" fill="#d4c2b0"/></g></svg>
<svg style="left:1291px;top:937px;overflow:hidden" width="128" height="72" viewBox="0 0 128 72"><g filter="url(#bl)"><rect width="128" height="72" fill="#b86a20"/><rect width="128" height="12" fill="#5a3a1a"/><rect x="0" y="4" width="6" height="56" fill="#6a6440"/><rect x="15" y="4" width="9" height="56" fill="#3e5448"/><rect x="33" y="4" width="7" height="56" fill="#4a5a44"/><rect x="48" y="4" width="7" height="56" fill="#80a088"/><rect x="62" y="4" width="8" height="56" fill="#6e9078"/><rect x="78" y="4" width="8" height="56" fill="#5e7e66"/><rect x="92" y="4" width="5" height="56" fill="#56704e"/><rect x="102" y="4" width="6" height="56" fill="#687850"/><rect x="6" y="3" width="9" height="58" fill="#e8901e"/><rect x="8" y="6" width="4" height="50" fill="#f4a838" opacity=".8"/><rect x="24" y="3" width="9" height="58" fill="#e8901e"/><rect x="26" y="6" width="4" height="50" fill="#f4a838" opacity=".8"/><rect x="40" y="3" width="8" height="58" fill="#e8901e"/><rect x="42" y="6" width="3" height="50" fill="#f4a838" opacity=".8"/><rect x="55" y="3" width="7" height="58" fill="#e8901e"/><rect x="57" y="6" width="2" height="50" fill="#f4a838" opacity=".8"/><rect x="70" y="3" width="8" height="58" fill="#e8901e"/><rect x="72" y="6" width="3" height="50" fill="#f4a838" opacity=".8"/><rect x="86" y="3" width="6" height="58" fill="#e8901e"/><rect x="88" y="6" width="2" height="50" fill="#f4a838" opacity=".8"/><rect x="97" y="3" width="5" height="58" fill="#e8901e"/><rect x="99" y="6" width="2" height="50" fill="#f4a838" opacity=".8"/><rect x="50" y="22" width="6" height="3" fill="#e8f0e0"/><rect x="64" y="28" width="6" height="3" fill="#e0f0d8"/><rect x="64" y="40" width="5" height="6" fill="#c8c8f0"/><rect x="80" y="30" width="5" height="3" fill="#e8f0e0"/><rect x="94" y="38" width="4" height="3" fill="#ffffff"/><rect x="82" y="4" width="6" height="12" fill="#80c048"/><rect x="101" y="2" width="5" height="18" fill="#90c040"/><rect x="72" y="6" width="4" height="4" fill="#ffffff"/><rect x="108" y="0" width="20" height="40" fill="#34183a"/><circle cx="121" cy="6" r="2.6" fill="#fff8e0"/><circle cx="17" cy="19" r="5" fill="#d02030"/><rect x="11" y="17.5" width="12" height="3" fill="#fff"/><rect x="13" y="18" width="8" height="2" fill="#3040a0"/><rect x="108" y="40" width="20" height="22" fill="#6a2030"/><rect x="121" y="40" width="7" height="20" fill="#e02030"/><rect x="112" y="44" width="6" height="8" fill="#5070d0"/><rect x="100" y="46" width="6" height="8" fill="#e03030"/><rect x="50.1" y="51.4" width="2.2" height="9.7" fill="#2a1c20" opacity=".7"/><rect x="51.5" y="51.0" width="2.2" height="8.3" fill="#2a1c20" opacity=".7"/><rect x="22.8" y="51.1" width="2.2" height="8.5" fill="#2a1c20" opacity=".7"/><rect x="84.9" y="48.6" width="2.2" height="7.2" fill="#2a1c20" opacity=".7"/><rect x="13.2" y="52.9" width="2.2" height="8.8" fill="#2a1c20" opacity=".7"/><rect x="8.3" y="53.9" width="2.2" height="9.9" fill="#2a1c20" opacity=".7"/><rect x="70.7" y="51.7" width="2.2" height="6.6" fill="#2a1c20" opacity=".7"/><rect x="5.5" y="51.2" width="2.2" height="6.2" fill="#2a1c20" opacity=".7"/><rect x="23.4" y="49.5" width="2.2" height="6.1" fill="#2a1c20" opacity=".7"/><rect x="51.3" y="50.6" width="2.2" height="9.4" fill="#2a1c20" opacity=".7"/><rect x="57.0" y="51.8" width="2.2" height="8.0" fill="#2a1c20" opacity=".7"/><rect x="71.6" y="50.7" width="2.2" height="7.1" fill="#2a1c20" opacity=".7"/><rect x="105.8" y="54.0" width="2.2" height="9.4" fill="#2a1c20" opacity=".7"/><rect x="76.2" y="49.9" width="2.2" height="6.9" fill="#2a1c20" opacity=".7"/><rect x="0" y="60" width="128" height="12" fill="#c46a38"/><ellipse cx="37.0" cy="59.0" rx="2.5" ry="1" fill="#f0b090" opacity=".6"/><ellipse cx="51.3" cy="69.9" rx="1.8" ry="1" fill="#f0b090" opacity=".6"/><ellipse cx="122.6" cy="69.9" rx="1.0" ry="1" fill="#f0b090" opacity=".6"/><ellipse cx="26.8" cy="70.7" rx="1.9" ry="1" fill="#f0b090" opacity=".6"/><ellipse cx="125.5" cy="63.6" rx="1.1" ry="1" fill="#f0b090" opacity=".6"/><ellipse cx="80.6" cy="68.9" rx="1.5" ry="1" fill="#f0b090" opacity=".6"/><ellipse cx="11.2" cy="62.7" rx="2.9" ry="1" fill="#f0b090" opacity=".6"/><ellipse cx="97.0" cy="59.7" rx="1.5" ry="1" fill="#f0b090" opacity=".6"/><ellipse cx="12.9" cy="58.8" rx="2.6" ry="1" fill="#f0b090" opacity=".6"/><ellipse cx="22.7" cy="65.8" rx="1.9" ry="1" fill="#f0b090" opacity=".6"/><ellipse cx="24.4" cy="68.2" rx="1.3" ry="1" fill="#f0b090" opacity=".6"/><ellipse cx="82.4" cy="59.6" rx="1.8" ry="1" fill="#f0b090" opacity=".6"/><ellipse cx="27.2" cy="61.8" rx="2.9" ry="1" fill="#f0b090" opacity=".6"/><ellipse cx="102.8" cy="62.3" rx="2.8" ry="1" fill="#f0b090" opacity=".6"/><ellipse cx="27.0" cy="63.5" rx="2.7" ry="1" fill="#f0b090" opacity=".6"/><ellipse cx="82.2" cy="59.4" rx="3.0" ry="1" fill="#f0b090" opacity=".6"/><ellipse cx="27.3" cy="61.6" rx="2.5" ry="1" fill="#f0b090" opacity=".6"/><ellipse cx="42.1" cy="62.1" rx="1.1" ry="1" fill="#f0b090" opacity=".6"/><ellipse cx="11.5" cy="66.2" rx="1.5" ry="1" fill="#f0b090" opacity=".6"/><ellipse cx="77.0" cy="63.2" rx="1.9" ry="1" fill="#f0b090" opacity=".6"/><ellipse cx="122.8" cy="64.8" rx="2.1" ry="1" fill="#f0b090" opacity=".6"/><ellipse cx="110.9" cy="60.6" rx="1.3" ry="1" fill="#f0b090" opacity=".6"/><ellipse cx="116.3" cy="69.4" rx="1.5" ry="1" fill="#f0b090" opacity=".6"/><ellipse cx="24.3" cy="68.4" rx="2.9" ry="1" fill="#f0b090" opacity=".6"/><ellipse cx="25.2" cy="71.3" rx="2.8" ry="1" fill="#f0b090" opacity=".6"/><ellipse cx="77.3" cy="63.9" rx="1.2" ry="1" fill="#f0b090" opacity=".6"/><ellipse cx="5.0" cy="71.5" rx="1.5" ry="1" fill="#f0b090" opacity=".6"/><ellipse cx="90.2" cy="61.6" rx="2.6" ry="1" fill="#f0b090" opacity=".6"/><ellipse cx="76.3" cy="62.1" rx="1.4" ry="1" fill="#f0b090" opacity=".6"/><ellipse cx="92.2" cy="59.0" rx="1.5" ry="1" fill="#f0b090" opacity=".6"/><ellipse cx="71.6" cy="69.9" rx="2.2" ry="1" fill="#f0b090" opacity=".6"/><ellipse cx="35.9" cy="70.8" rx="1.4" ry="1" fill="#f0b090" opacity=".6"/><ellipse cx="2.1" cy="61.8" rx="1.9" ry="1" fill="#f0b090" opacity=".6"/><ellipse cx="7.7" cy="60.5" rx="1.7" ry="1" fill="#f0b090" opacity=".6"/><ellipse cx="73.2" cy="59.8" rx="1.7" ry="1" fill="#f0b090" opacity=".6"/><ellipse cx="114.0" cy="71.7" rx="2.3" ry="1" fill="#f0b090" opacity=".6"/><ellipse cx="88.5" cy="66.2" rx="1.3" ry="1" fill="#f0b090" opacity=".6"/><ellipse cx="4.5" cy="58.3" rx="2.8" ry="1" fill="#f0b090" opacity=".6"/><ellipse cx="89.7" cy="71.5" rx="1.0" ry="1" fill="#f0b090" opacity=".6"/><ellipse cx="81.4" cy="64.8" rx="2.5" ry="1" fill="#f0b090" opacity=".6"/></g></svg>
<!-- THUMBS -->
<svg style="left:0;top:0" width="2934" height="1090" viewBox="0 0 2934 1090"><path fill="none" stroke="rgba(0,0,0,.2)" stroke-width="1" d="M1291,608.5 A3.5,3.5 0 0 1 1294.5,605 M1427.5,605 A3.5,3.5 0 0 1 1431,608.5 M1431,641.5 A3.5,3.5 0 0 1 1427.5,645 M1294.5,645 A3.5,3.5 0 0 1 1291,641.5 M1239,647.5 A3.5,3.5 0 0 1 1242.5,644 M1271.5,644 A3.5,3.5 0 0 1 1275,647.5 M1275,676.5 A3.5,3.5 0 0 1 1271.5,680 M1242.5,680 A3.5,3.5 0 0 1 1239,676.5 M2774,639.5 A3.5,3.5 0 0 1 2777.5,636 M2800.5,636 A3.5,3.5 0 0 1 2804,639.5 M2804,682.5 A3.5,3.5 0 0 1 2800.5,686 M2777.5,686 A3.5,3.5 0 0 1 2774,682.5 M1291,754.5 A3.5,3.5 0 0 1 1294.5,751 M1487.5,751 A3.5,3.5 0 0 1 1491,754.5 M1491,787.5 A3.5,3.5 0 0 1 1487.5,791 M1294.5,791 A3.5,3.5 0 0 1 1291,787.5 M1239,793.5 A3.5,3.5 0 0 1 1242.5,790 M1271.5,790 A3.5,3.5 0 0 1 1275,793.5 M1275,822.5 A3.5,3.5 0 0 1 1271.5,826 M1242.5,826 A3.5,3.5 0 0 1 1239,822.5 M2774,785.5 A3.5,3.5 0 0 1 2777.5,782 M2800.5,782 A3.5,3.5 0 0 1 2804,785.5 M2804,828.5 A3.5,3.5 0 0 1 2800.5,832 M2777.5,832 A3.5,3.5 0 0 1 2774,828.5 M1291,900.5 A3.5,3.5 0 0 1 1294.5,897 M1466.5,897 A3.5,3.5 0 0 1 1470,900.5 M1470,933.5 A3.5,3.5 0 0 1 1466.5,937 M1294.5,937 A3.5,3.5 0 0 1 1291,933.5 M1239,939.5 A3.5,3.5 0 0 1 1242.5,936 M1271.5,936 A3.5,3.5 0 0 1 1275,939.5 M1275,968.5 A3.5,3.5 0 0 1 1271.5,972 M1242.5,972 A3.5,3.5 0 0 1 1239,968.5 M2774,931.5 A3.5,3.5 0 0 1 2777.5,928 M2800.5,928 A3.5,3.5 0 0 1 2804,931.5 M2804,974.5 A3.5,3.5 0 0 1 2800.5,978 M2777.5,978 A3.5,3.5 0 0 1 2774,974.5 M2553,113.5 A3.5,3.5 0 0 1 2556.5,110 M2585.5,110 A3.5,3.5 0 0 1 2589,113.5 M2589,141.5 A3.5,3.5 0 0 1 2585.5,145 M2556.5,145 A3.5,3.5 0 0 1 2553,141.5"/></svg>
<!-- CONTENT_END -->
<!-- menu -->
<div class="box" style="left:2434px;top:216px;width:331px;height:424px;background:#1f1f1f;border:2px solid #343434;border-radius:8px;box-shadow:0 4px 10px rgba(0,0,0,.18)"></div>
<div class="box" style="left:2442px;top:300px;width:248px;height:74px;background:#f7ca9c;border-radius:8px"></div>
<div class="box" style="left:2450px;top:308px;width:232px;height:58px;background:#1f1f1f"></div>
<div class="box" style="left:2440px;top:375.5px;width:319px;height:2px;background:#343434"></div>
<div class="box" style="left:2440px;top:547.5px;width:319px;height:2px;background:#343434"></div>
<div class="t" style="left:2552.4px;top:243.9px;color:#f2f2f2">Tiles</div>
<div class="t" style="left:2552.5px;top:313.8px;color:#f2f2f2">List</div>
<div class="t" style="left:2551.8px;top:416.4px;color:#f2f2f2">Show thumbnails</div>
<div class="t" style="left:2551.8px;top:485.7px;color:#f2f2f2">Show clipboard</div>
<div class="t" style="left:2507.9px;top:587.3px;color:#f2f2f2">Select columns</div>
<svg style="left:2440px;top:230px" width="120" height="400" viewBox="2440 230 120 400">
<g fill="none" stroke="#fff" stroke-width="2"><rect x="2511.1" y="243.2" width="9.6" height="9.6" rx="2.5"/><rect x="2527.2" y="243.2" width="9.8" height="9.6" rx="2.5"/><rect x="2511.1" y="258.8" width="9.6" height="10.1" rx="2.5"/><rect x="2527.2" y="258.8" width="9.8" height="10.1" rx="2.5"/></g>
<circle cx="2480" cy="325" r="6" fill="#0b78e8"/>
<g fill="#fff"><rect x="2512" y="313.7" width="24" height="4"/><rect x="2512" y="320" width="20" height="2"/><rect x="2512" y="324" width="24" height="2"/><rect x="2512" y="328" width="20" height="2"/><rect x="2512" y="332" width="24" height="2"/><rect x="2512" y="336" width="20" height="2"/></g>
<path fill="none" stroke="#0b78e8" stroke-width="3.3" d="M2470.5,425.8 L2477.3,432.6 L2489.5,420.4"/>
<rect x="2511.2" y="417.1" width="25.7" height="21.7" fill="none" stroke="#fff" stroke-width="2.2"/>
<path fill="#fff" d="M2513.9,436.1 L2521,424.4 L2525.5,431 L2527.7,428.2 L2534,436.1 Z"/><circle cx="2531.7" cy="421.9" r="2" fill="#fff"/>
<path fill="none" stroke="#fff" stroke-width="2" d="M2518,487 H2515.1 V510.6 H2533 V487 H2530"/>
<path fill="#fff" d="M2518,486.1 H2530 V489.6 H2518 Z"/><circle cx="2524" cy="486.3" r="2.6" fill="none" stroke="#fff" stroke-width="1.6"/>
<rect x="2467.05" y="589.05" width="25.9" height="19.7" fill="#000" stroke="#fff" stroke-width="2.3"/>
<g fill="#fff"><rect x="2470" y="594" width="4" height="2.1"/><rect x="2470" y="601.9" width="4" height="2.2"/></g>
<g fill="none" stroke="#fff" stroke-width="2"><rect x="2477" y="592.8" width="12.2" height="4.4"/><rect x="2477" y="600.9" width="12.2" height="4.2"/></g>
</svg>
<!-- MENU_END -->
</body></html>
